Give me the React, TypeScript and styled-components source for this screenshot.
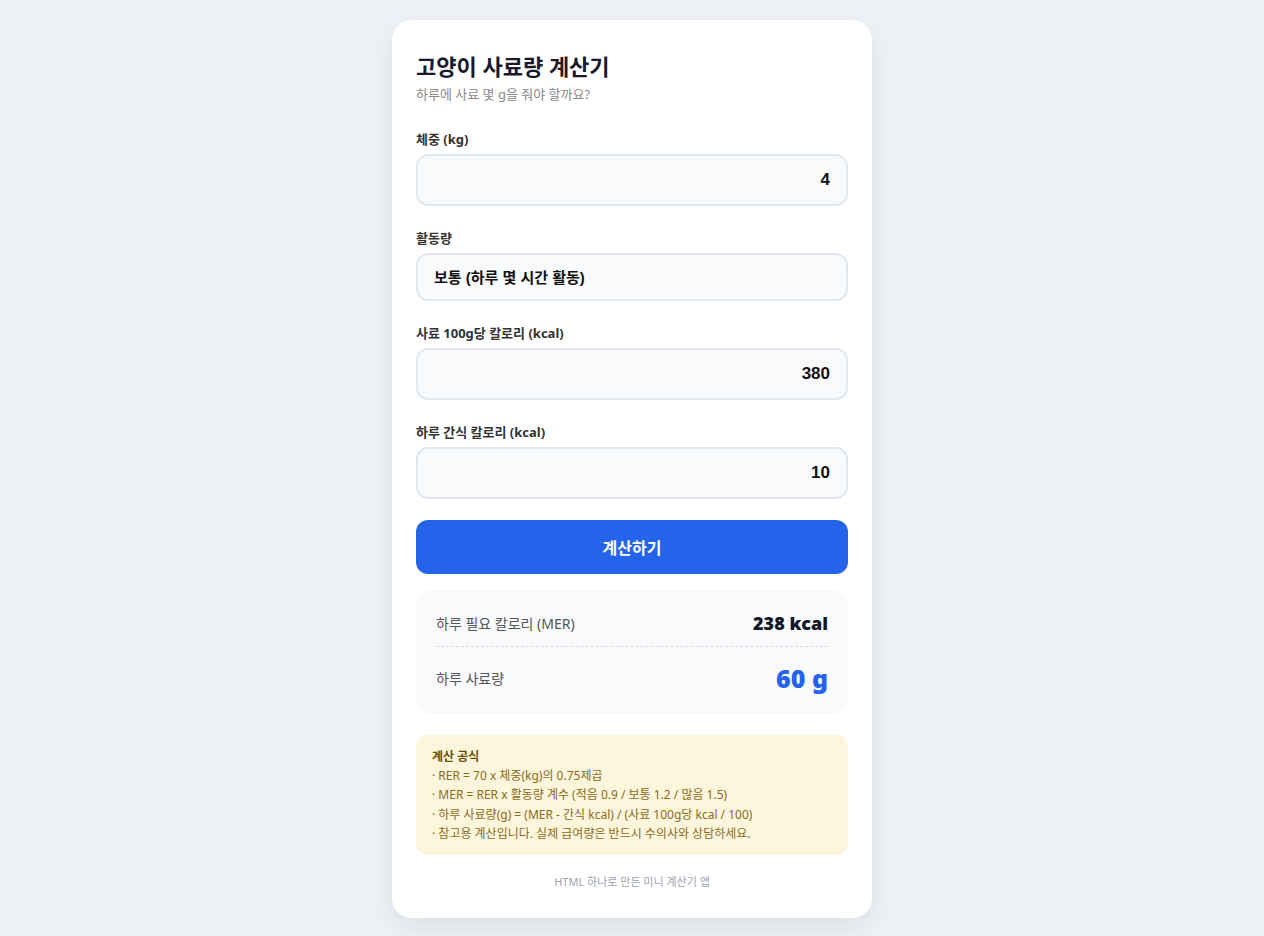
import React, { useState } from "react";
import styled, { createGlobalStyle } from "styled-components";

const GlobalStyle = createGlobalStyle`
  * {
    box-sizing: border-box;
  }

  body {
    margin: 0;
    background-color: #eef2f7;
    font-family: "Noto Sans", "Noto Sans CJK KR", sans-serif;
    color: #1f2937;
  }
`;

const Page = styled.div`
  display: flex;
  justify-content: center;
  padding: 20px 0;
`;

const Card = styled.div`
  width: 480px;
  background-color: #fff;
  border-radius: 20px;
  padding: 32px 24px 28px;
  box-shadow: 0 10px 30px rgba(15, 23, 42, 0.08);
`;

const Title = styled.h1`
  margin: 0;
  font-size: 22px;
  line-height: 28px;
  font-weight: 700;
  color: #1a1a2e;
`;

const Subtitle = styled.p`
  margin: 5px 0 27px;
  font-size: 13px;
  line-height: 18px;
  color: #888;
`;

const Field = styled.div<{ $last?: boolean }>`
  margin-bottom: ${(p) => (p.$last ? "0" : "23px")};
`;

const Label = styled.label`
  display: block;
  font-size: 13px;
  line-height: 18px;
  font-weight: 700;
  color: #333;
  margin-bottom: 6px;
`;

const NumberInput = styled.input`
  display: block;
  width: 100%;
  height: 52px;
  padding: 0 16px;
  border: 2px solid #e2e8f0;
  border-radius: 12px;
  background-color: #f8fafc;
  font-family: "Liberation Sans", "Noto Sans CJK KR", sans-serif;
  font-size: 17px;
  font-weight: 700;
  color: #111;
  text-align: right;
  outline: none;
`;

const Select = styled.select`
  display: block;
  width: 100%;
  height: 48px;
  padding: 0 16px;
  border: 2px solid #e2e8f0;
  border-radius: 12px;
  background-color: #f8fafc;
  font-family: "Liberation Sans", "Noto Sans CJK KR", sans-serif;
  font-size: 15px;
  font-weight: 700;
  color: #111;
  appearance: none;
  -webkit-appearance: none;
  outline: none;
`;

const SubmitButton = styled.button`
  display: block;
  width: 100%;
  height: 54px;
  margin-top: 21px;
  border: none;
  border-radius: 12px;
  background-color: #2563eb;
  color: #fff;
  font-family: "Noto Sans CJK KR", sans-serif;
  font-size: 16px;
  font-weight: 700;
  cursor: pointer;
`;

const ResultBox = styled.div`
  margin-top: 16px;
  padding: 20px;
  border-radius: 16px;
  background-color: #f8fafc;
`;

const ResultRow = styled.div`
  display: flex;
  justify-content: space-between;
  align-items: center;

  &:first-child {
    padding-bottom: 10px;
    border-bottom: 1px dashed #d6dbe3;
  }

  &:last-child {
    padding-top: 15px;
  }
`;

const ResultLabel = styled.span`
  font-size: 14px;
  color: #555;
`;

const ResultValue = styled.span<{ $big?: boolean }>`
  font-size: ${(p) => (p.$big ? "25px" : "18px")};
  line-height: ${(p) => (p.$big ? "32px" : "26px")};
  font-weight: 900;
  color: ${(p) => (p.$big ? "#2563eb" : "#111827")};
`;

const FormulaBox = styled.div`
  margin-top: 21px;
  padding: 12px 16px;
  border-radius: 12px;
  background-color: #fdf6dc;
  font-size: 12px;
  line-height: 19.2px;
  color: #8a6a1c;

  & strong {
    display: block;
    color: #6b4e0c;
    font-weight: 700;
  }
`;

const Footer = styled.p`
  margin: 19px 0 0;
  text-align: center;
  font-size: 11px;
  line-height: 16px;
  color: #9ca3af;
`;

const factors: Record<string, number> = { low: 0.9, normal: 1.2, high: 1.5 };

export default function App() {
  const [weight, setWeight] = useState("4");
  const [activity, setActivity] = useState("normal");
  const [foodKcal, setFoodKcal] = useState("380");
  const [snack, setSnack] = useState("10");
  const [result, setResult] = useState({ mer: 238, food: 60 });

  const calculate = () => {
    const rer = 70 * Math.pow(Number(weight), 0.75);
    const mer = rer * factors[activity];
    const food = (mer - Number(snack)) / (Number(foodKcal) / 100);
    setResult({ mer: Math.round(mer), food: Math.round(food) });
  };

  return (
    <Page>
      <GlobalStyle />
      <Card>
        <Title>고양이 사료량 계산기</Title>
        <Subtitle>하루에 사료 몇 g을 줘야 할까요?</Subtitle>

        <Field>
          <Label>체중 (kg)</Label>
          <NumberInput value={weight} onChange={(e) => setWeight(e.target.value)} />
        </Field>

        <Field>
          <Label>활동량</Label>
          <Select value={activity} onChange={(e) => setActivity(e.target.value)}>
            <option value="low">적음 (거의 안 움직임)</option>
            <option value="normal">보통 (하루 몇 시간 활동)</option>
            <option value="high">많음 (매우 활발함)</option>
          </Select>
        </Field>

        <Field>
          <Label>사료 100g당 칼로리 (kcal)</Label>
          <NumberInput value={foodKcal} onChange={(e) => setFoodKcal(e.target.value)} />
        </Field>

        <Field $last>
          <Label>하루 간식 칼로리 (kcal)</Label>
          <NumberInput value={snack} onChange={(e) => setSnack(e.target.value)} />
        </Field>

        <SubmitButton onClick={calculate}>계산하기</SubmitButton>

        <ResultBox>
          <ResultRow>
            <ResultLabel>하루 필요 칼로리 (MER)</ResultLabel>
            <ResultValue>{result.mer} kcal</ResultValue>
          </ResultRow>
          <ResultRow>
            <ResultLabel>하루 사료량</ResultLabel>
            <ResultValue $big>{result.food} g</ResultValue>
          </ResultRow>
        </ResultBox>

        <FormulaBox>
          <strong>계산 공식</strong>
          · RER = 70 x 체중(kg)의 0.75제곱
          <br />· MER = RER x 활동량 계수 (적음 0.9 / 보통 1.2 / 많음 1.5)
          <br />· 하루 사료량(g) = (MER - 간식 kcal) / (사료 100g당 kcal / 100)
          <br />· 참고용 계산입니다. 실제 급여량은 반드시 수의사와 상담하세요.
        </FormulaBox>

        <Footer>HTML 하나로 만든 미니 계산기 앱</Footer>
      </Card>
    </Page>
  );
}
